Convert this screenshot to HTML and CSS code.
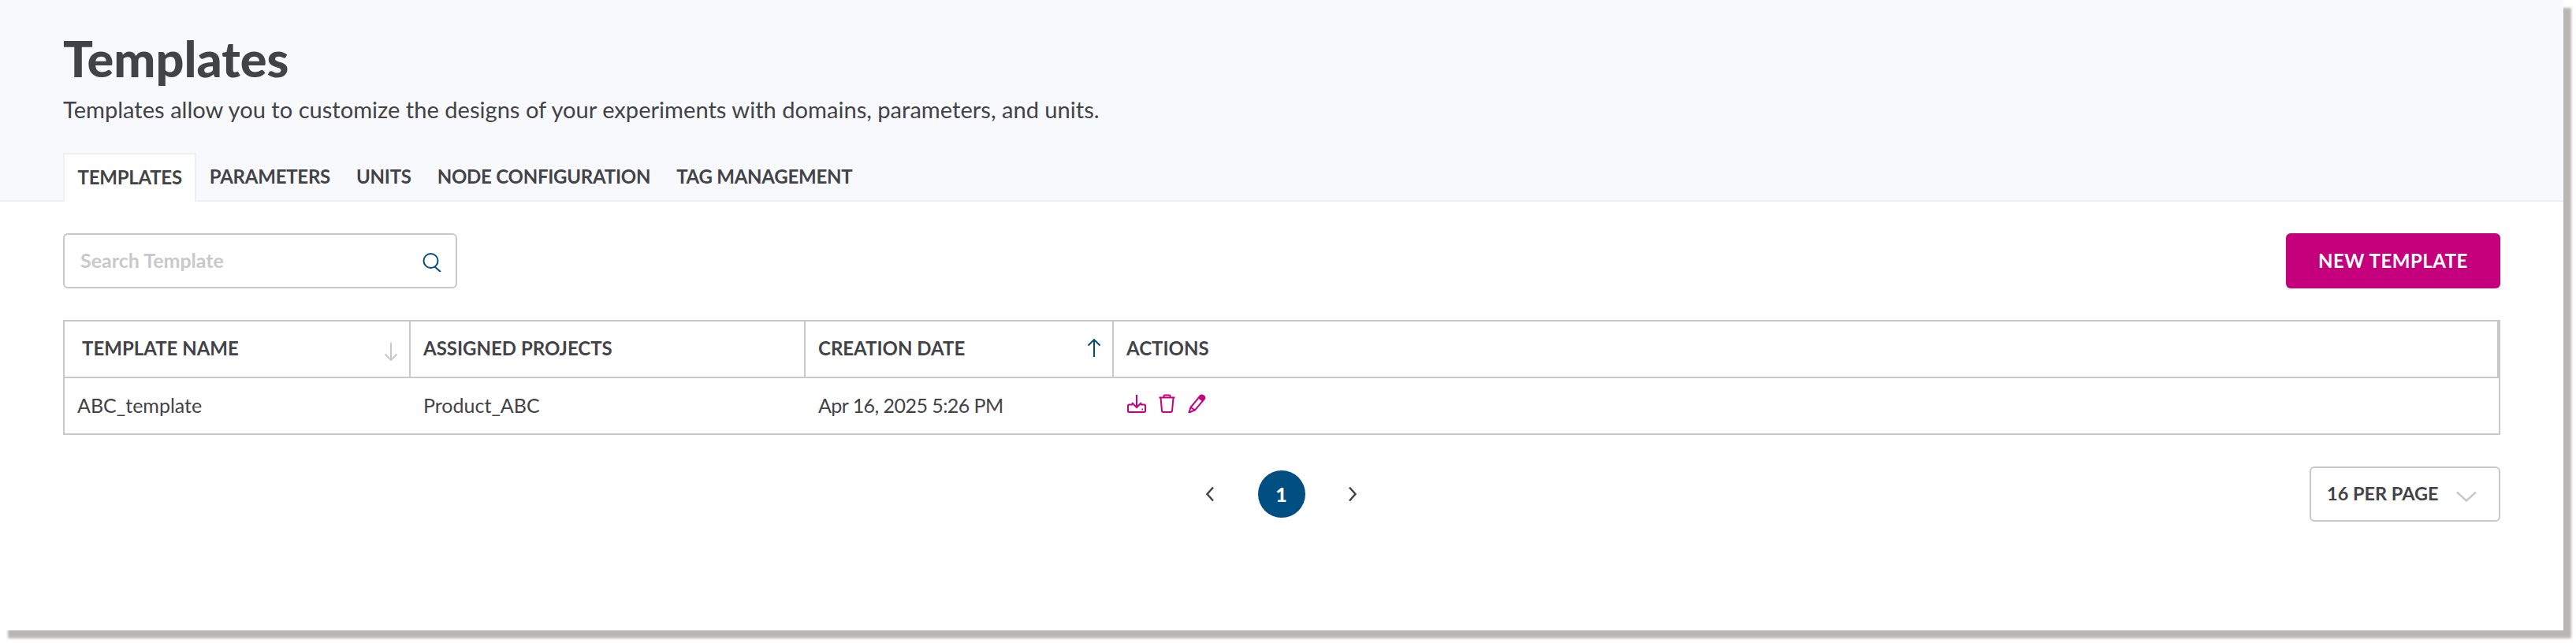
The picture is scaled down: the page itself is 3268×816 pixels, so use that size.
FILE: index.html
```html
<!DOCTYPE html>
<html lang="en">
<head>
<meta charset="utf-8">
<title>Templates</title>
<link rel="stylesheet" href="styles.css">
</head>
<body>
<div class="window">
  <header class="head">
    <h1 class="title">Templates</h1>
    <p class="subtitle">Templates allow you to customize the designs of your experiments with domains, parameters, and units.</p>
    <nav class="tabs">
      <a class="tab active">TEMPLATES</a>
      <a class="tab">PARAMETERS</a>
      <a class="tab">UNITS</a>
      <a class="tab">NODE CONFIGURATION</a>
      <a class="tab">TAG MANAGEMENT</a>
    </nav>
  </header>
  <main class="content">
    <div class="toolbar">
      <div class="search">
        <span class="placeholder">Search Template</span>
        <svg class="search-icon" viewBox="0 0 24 24" width="24" height="24"><circle cx="10.500" cy="10" r="9"/><path d="M15.500 17.500 23 24"/></svg>
      </div>
      <button class="primary">NEW TEMPLATE</button>
    </div>
    <div class="table">
      <div class="cell th first">TEMPLATE NAME
        <svg class="sort muted" viewBox="0 0 18 24" width="18" height="24"><path d="M9 1v22M1.500 15.500 9 23l7.500-7.500"/></svg>
      </div>
      <div class="cell th">ASSIGNED PROJECTS</div>
      <div class="cell th">CREATION DATE
        <svg class="sort active-sort" viewBox="0 0 18 24" width="18" height="24"><path d="M9 23V1M1.500 8.500 9 1l7.500 7.500"/></svg>
      </div>
      <div class="cell th last">ACTIONS</div>
      <div class="cell td name">ABC_template</div>
      <div class="cell td">Product_ABC</div>
      <div class="cell td date">Apr 16, 2025 5:26 PM</div>
      <div class="cell td icons">
        <svg class="icon" viewBox="0 0 24 24" width="24" height="24"><path d="M12 1v16M6 11l6 6 6-6M7 13.500H2.500Q1 13.500 1 15v6.500Q1 23 2.500 23h19q1.500 0 1.500-1.500V15q0-1.500-1.500-1.500H17M18.500 19.500H20"/></svg>
        <svg class="icon" viewBox="0 0 21 24" width="21" height="24"><path d="M.5 4.500h20M6.500 4.500v-2q0-1 1-1h6q1 0 1 1v2M2.500 4.500l1.500 17q.2 1.500 2 1.500h9q1.800 0 2-1.500l1.500-17"/></svg>
        <svg class="icon" viewBox="0 0 24 24" width="24" height="24"><path d="M3.500 17 15.500 2.500q1.500-1.800 4-.3t1.600 3.800L9 20.500l-7.500 3zM3.500 17 9 20.500"/><path class="fill" d="M15.500 2.500q1.500-1.800 4-.3t1.600 3.800L18.500 9.500l-5.500-4z"/></svg>
      </div>
    </div>
    <div class="footer">
      <div class="pager">
        <svg class="chev" viewBox="0 0 12 20" width="12" height="20"><path d="M10 1.500 2.500 10l7.500 8.500"/></svg>
        <span class="page">1</span>
        <svg class="chev" viewBox="0 0 12 20" width="12" height="20"><path d="M2 1.500 9.500 10 2 18.500"/></svg>
      </div>
      <div class="perpage">
        <span>16 PER PAGE</span>
        <svg class="caret" viewBox="0 0 26 14" width="26" height="14"><path d="M1 1.500l12 11 12-11"/></svg>
      </div>
    </div>
  </main>
</div>
</body>
</html>
```
FILE: styles.css
```css
* { box-sizing: border-box; }
html, body { margin: 0; background: #fff; }
body { font-family: "Lato", "Liberation Sans", sans-serif; color: #424347; width: 3268px; height: 816px; overflow: hidden; }
.window { width: 3252px; height: 800px; background: #fff; box-shadow: 10px 10px 3px #b8b6b4; }
.head { height: 256px; background: #f8f9fd; border-bottom: 2px solid #eeeef4; padding: 38px 0 0 80px; }
.title { margin: 0; font-size: 63px; line-height: 72px; font-weight: 900; color: #424347; }
.subtitle { margin: 11px 0 0; font-size: 29.100px; line-height: 36px; font-weight: 400; color: #424347; }
.tabs { display: flex; margin-top: 37px; height: 62px; }
.tab { display: flex; align-items: center; padding: 0 16.500px 4px; font-size: 24px; font-weight: 700; letter-spacing: -.25px; color: #424347; }
.tab.active { background: #fff; border: 2px solid #eeeef4; border-bottom: 0; height: 62px; }
.content { padding: 40px 80px 0; }
.toolbar { display: flex; justify-content: space-between; height: 70px; }
.search { width: 500px; height: 70px; border: 2px solid #c8c8cd; border-radius: 6px; display: flex; align-items: center; justify-content: space-between; padding: 0 18px 0 20px; }
.placeholder { font-size: 25px; font-weight: 700; color: #c8c8cd; margin-bottom: 3px; }
.search-icon { fill: none; stroke: #004e82; stroke-width: 2; margin-top: 4px; }
.primary { width: 272px; height: 70px; border: 0; border-radius: 6px; background: #c5007c; color: #fff; font: 700 24px "Lato", "Liberation Sans", sans-serif; letter-spacing: .5px; padding: 0 0 2px; }
.table { display: grid; grid-template-columns: 439px 501px 391px 1fr; grid-template-rows: 72px 70px; margin-top: 40px; border: 2px solid #c8c8cd; }
.cell { display: flex; align-items: center; }
.th { font-size: 24px; font-weight: 700; border-right: 2px solid #c8c8cd; border-bottom: 2px solid #c8c8cd; padding: 0 14px 3px 16px; justify-content: space-between; }
.th.first { padding-left: 22px; }
.td { font-size: 25px; font-weight: 400; padding: 0 16px 3px; }
.date { letter-spacing: -.55px; }
.sort { fill: none; stroke-width: 2; }
.muted { stroke: #c8c8cd; margin-top: 8px; }
.active-sort { stroke: #004e82; }
.icons { gap: 16px; padding-left: 17px; padding-bottom: 6px; }
.icon { fill: none; stroke: #c5007c; stroke-width: 2; }
.icon .fill { fill: #c5007c; stroke: none; }
.footer { position: relative; display: flex; justify-content: flex-end; margin-top: 40px; }
.pager { position: absolute; left: 1449px; top: 5px; width: 193px; height: 60px; display: flex; align-items: center; justify-content: space-between; }
.page { width: 60px; height: 60px; border-radius: 50%; background: #004e82; color: #fff; font-size: 25px; font-weight: 900; display: flex; align-items: center; justify-content: center; }
.chev { fill: none; stroke: #424347; stroke-width: 2.500; }
.perpage { width: 242px; height: 70px; border: 2px solid #c8c8cd; border-radius: 6px; display: flex; align-items: center; justify-content: space-between; padding: 0 28px 3px 20px; font-size: 23.500px; font-weight: 700; }
.caret { fill: none; stroke: #c8c8cd; stroke-width: 2.500; margin-top: 8px; }
```
